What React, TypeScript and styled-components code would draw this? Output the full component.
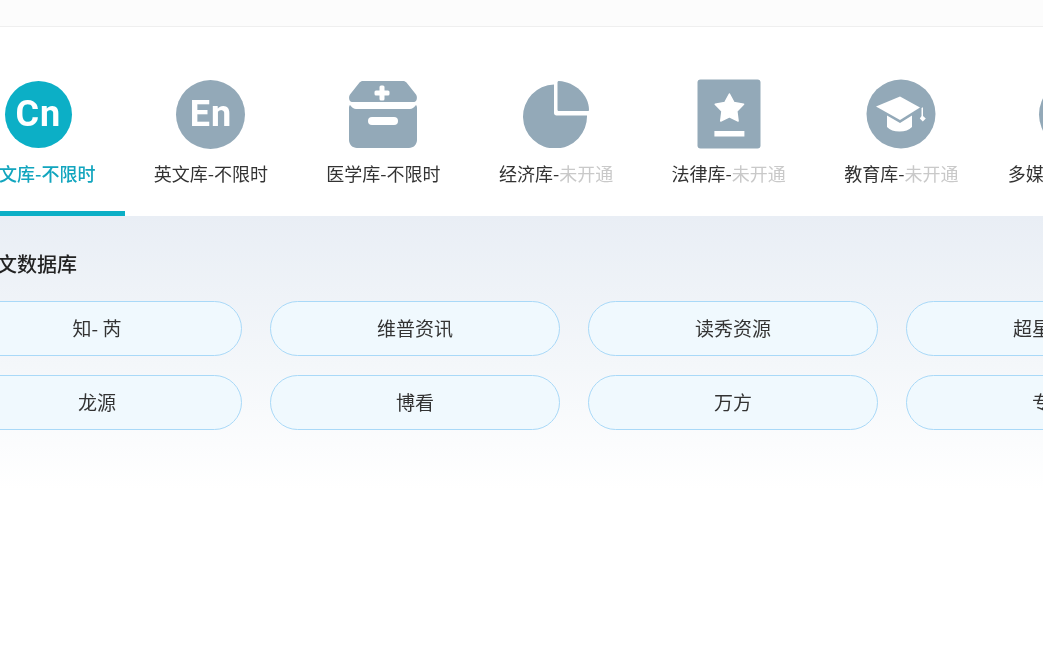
import React from "react";
import styled, { createGlobalStyle } from "styled-components";

const GlobalStyle = createGlobalStyle`
  html, body {
    margin: 0;
    padding: 0;
    background: #fff;
    overflow: hidden;
  }
  body {
    font-family: "Liberation Sans", "Noto Sans CJK SC", sans-serif;
  }
`;

// the reference is a soft, upscaled capture
const Page = styled.div`
  width: 1043px;
  height: 652px;
  overflow: hidden;
  filter: blur(0.35px);
`;

const TopBar = styled.div`
  height: 26px;
  background: #fcfcfc;
  border-bottom: 1px solid #efefef;
`;

const TabRow = styled.nav`
  display: flex;
  height: 189px;
  margin-left: -48px;
`;

const Tab = styled.div<{ $active?: boolean }>`
  flex: 0 0 172.6px;
  box-sizing: border-box;
  display: flex;
  flex-direction: column;
  align-items: center;
  padding-top: 52px;
  border-bottom: 5px solid ${(p) => (p.$active ? "#0cafc6" : "transparent")};
`;

const IconBox = styled.div`
  width: 70px;
  height: 70px;
  display: flex;
  align-items: center;
  justify-content: center;
`;

const LetterIcon = styled.div<{ $active?: boolean }>`
  width: ${(p) => (p.$active ? "67px" : "69px")};
  height: ${(p) => (p.$active ? "67px" : "69px")};
  border-radius: 50%;
  background: ${(p) => (p.$active ? "#0cafc6" : "#93a9b8")};
  color: #fff;
  display: flex;
  align-items: center;
  justify-content: center;
  font-family: Roboto, sans-serif;
  font-weight: 700;
  font-size: 36px;
  letter-spacing: 1px;
  line-height: 1;
`;

const TabLabel = styled.div<{ $active?: boolean }>`
  margin-top: 12px;
  font-size: 18px;
  line-height: 24px;
  white-space: nowrap;
  font-weight: ${(p) => (p.$active ? 500 : 400)};
  color: ${(p) => (p.$active ? "#12a5be" : "#333")};
  font-family: "Noto Sans CJK SC", sans-serif;
`;

const Muted = styled.span`
  color: #c9c9c9;
`;

const Section = styled.section`
  height: 274px;
  box-sizing: border-box;
  padding: 33px 0 0 0;
  background: linear-gradient(180deg, #e9eef5 0%, #f4f7fa 55%, #ffffff 100%);
`;

const SectionTitle = styled.h2`
  margin: 0 0 22px -23px;
  font-family: "Noto Sans CJK SC", sans-serif;
  font-size: 20px;
  line-height: 30px;
  font-weight: 500;
  color: #222;
`;

const LinkGrid = styled.div`
  display: grid;
  grid-template-columns: repeat(4, 290px);
  grid-auto-rows: 55px;
  column-gap: 28px;
  row-gap: 19px;
  margin-left: -48px;
`;

const LinkButton = styled.div`
  box-sizing: border-box;
  border: 1px solid #a9d9f8;
  border-radius: 28px;
  background: #f0f9fe;
  padding-bottom: 2px;
  display: flex;
  align-items: center;
  justify-content: center;
  font-family: "Noto Sans CJK SC", sans-serif;
  font-size: 19px;
  color: #333;
  white-space: nowrap;
`;

const ICON = "#93a9b8";

const BoxIcon = () => (
  <svg width="70" height="68" viewBox="0 0 70 68">
    <path
      fill={ICON}
      d="M15 1h40c1.500 0 2.600.6 3.500 1.600L68 14.500c1.600 2 1.200 7.500-2 7.500H4c-3.200 0-3.600-5.500-2-7.500L11.500 2.600C12.400 1.600 13.500 1 15 1z"
    />
    <path
      fill={ICON}
      d="M2 25c2 2.500 4 4 6 4h54c2 0 4-1.500 6-4 .6.5 1 1.500 1 3v32c0 4.400-3.600 8-8 8H9c-4.400 0-8-3.600-8-8V28c0-1.500.4-2.500 1-3z"
    />
    <rect x="31.500" y="5.500" width="5" height="15" rx="1.500" fill="#fff" />
    <rect x="26.500" y="10.500" width="15" height="5" rx="1.500" fill="#fff" />
    <rect x="20" y="37" width="30" height="8" rx="4" fill="#fff" />
  </svg>
);

const PieIcon = () => (
  <svg width="70" height="68" viewBox="0 0 70 68">
    <path fill={ICON} d="M36.500 2.500c0-1 .6-1.500 1.500-1.500 16 1 30 14 30 29 0 .8-.5 1-1 1H38c-1 0-1.500-.5-1.500-1.500z" />
    <path
      fill={ICON}
      d="M33 4.500V33c0 1.500 1 2.500 2.500 2.500H66A32 32 0 1 1 33 4.500z"
    />
  </svg>
);

const BookIcon = () => (
  <svg width="64" height="70" viewBox="0 0 64 70">
    <rect x="0.500" y="0.500" width="63" height="69" rx="3" fill={ICON} />
    <path
      fill="#fff"
      stroke="#fff"
      strokeWidth="1.500"
      strokeLinejoin="round"
      d="M32.400 15L37 23.500 46.600 25.200 39.800 32.200 41.100 42 32.400 37.800 23.700 42 25 32.200 18.200 25.200 27.800 23.500z"
    />
    <rect x="17.400" y="52" width="30" height="5.500" fill="#fff" />
  </svg>
);

const CapIcon = () => (
  <svg width="70" height="70" viewBox="0 0 70 70">
    <circle cx="35" cy="35" r="34.500" fill={ICON} />
    <path fill="#fff" d="M34 17.500L10 27.500 34 41 54 28.500z" />
    <path fill="#fff" d="M21 36.500L34 44 46 36.500V48c-3 3-7 4.500-12.500 4.500S24 51 21 48z" />
    <path fill="#fff" d="M55.500 29l1.500-.8V37l2.800 2.500-3 3-3-3 1.700-2.500z" />
  </svg>
);

type TabItem = {
  name: string;
  open: boolean;
  icon: React.ReactNode;
  active?: boolean;
};

const tabs: TabItem[] = [
  { name: "中文库", open: true, active: true, icon: <LetterIcon $active>Cn</LetterIcon> },
  { name: "英文库", open: true, icon: <LetterIcon>En</LetterIcon> },
  { name: "医学库", open: true, icon: <BoxIcon /> },
  { name: "经济库", open: false, icon: <PieIcon /> },
  { name: "法律库", open: false, icon: <BookIcon /> },
  { name: "教育库", open: false, icon: <CapIcon /> },
  { name: "多媒体库", open: false, icon: <LetterIcon /> },
];

const links = ["知- 芮", "维普资讯", "读秀资源", "超星发现", "龙源", "博看", "万方", "专利"];

const App = () => {
  return (
    <Page>
      <GlobalStyle />
      <TopBar />
      <TabRow>
        {tabs.map((t) => (
          <Tab key={t.name} $active={t.active}>
            <IconBox>{t.icon}</IconBox>
            <TabLabel $active={t.active}>
              {t.name}-{t.open ? "不限时" : <Muted>未开通</Muted>}
            </TabLabel>
          </Tab>
        ))}
      </TabRow>
      <Section>
        <SectionTitle>中文数据库</SectionTitle>
        <LinkGrid>
          {links.map((l) => (
            <LinkButton key={l}>{l}</LinkButton>
          ))}
        </LinkGrid>
      </Section>
    </Page>
  );
};

export default App;
